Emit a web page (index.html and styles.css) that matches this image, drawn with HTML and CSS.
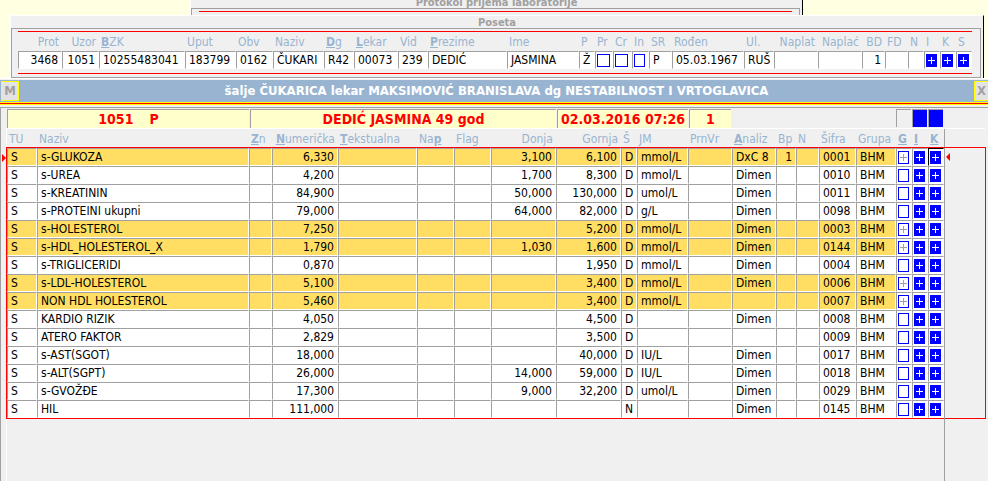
FILE: index.html
```html
<!DOCTYPE html>
<html lang="sr-Latn">
<head>
<meta charset="utf-8">
<title>Laboratorija</title>
<link rel="stylesheet" href="styles.css">
</head>
<body>
<section class="window window-protocol">
  <h2 class="window-title window-title-clipped">Protokol prijema laboratorije</h2>
  <div class="protocol-frame"><div class="protocol-rule"></div></div>
</section>

<section class="window window-visit">
  <h2 class="window-title">Poseta</h2>
  <div class="visit-frame">
    <div class="visit-body">
      <table class="grid visit-grid">
        <colgroup>
          <col class="w44"><col class="w37"><col><col class="w51"><col class="w37"><col class="w51"><col class="w30"><col class="w44"><col class="w30"><col class="w79"><col class="w72"><col class="w16"><col class="w18"><col class="w19"><col class="w17"><col class="w23"><col class="w72"><col class="w30"><col class="w44"><col class="w44"><col class="w23"><col class="w23"><col class="w16"><col class="w16"><col class="w16"><col class="w16">
        </colgroup>
        <thead>
          <tr>
            <th class="num">Prot</th><th class="num">Uzor</th><th><b>B</b>ZK</th><th>Uput</th><th>Obv</th><th>Naziv</th><th><b>D</b>g</th><th><b>L</b>ekar</th><th>Vid</th><th><b>P</b>rezime</th><th>Ime</th><th>P</th><th>Pr</th><th>Cr</th><th>In</th><th>SR</th><th>Rođen</th><th>Ul.</th><th class="num">Naplat</th><th class="num">Naplać</th><th class="num">BD</th><th>FD</th><th>N</th><th>I</th><th>K</th><th>S</th>
          </tr>
        </thead>
        <tbody>
          <tr>
            <td class="num">3468</td><td class="num">1051</td><td>10255483041</td><td>183799</td><td>0162</td><td>ČUKARI</td><td>R42</td><td>00073</td><td>239</td><td>DEDIĆ</td><td>JASMINA</td><td>Ž</td>
            <td class="tick"><input class="box wide" type="checkbox" aria-label="Pr"></td>
            <td class="tick"><input class="box wide" type="checkbox" aria-label="Cr"></td>
            <td class="tick"><input class="box" type="checkbox" aria-label="In"></td>
            <td>P</td><td>05.03.1967</td><td>RUŠ</td><td></td><td></td><td class="num">1</td><td></td><td></td>
            <td class="tick"><input class="box" type="checkbox" checked aria-label="I"></td>
            <td class="tick"><input class="box" type="checkbox" checked aria-label="K"></td>
            <td class="tick"><input class="box" type="checkbox" checked aria-label="S"></td>
          </tr>
        </tbody>
      </table>
    </div>
  </div>
</section>

<main class="results">
  <header class="results-bar">
    <button class="bar-button" type="button">M</button>
    <h1 class="results-title">šalje ČUKARICA lekar MAKSIMOVIĆ BRANISLAVA dg NESTABILNOST I VRTOGLAVICA</h1>
    <button class="bar-button bar-button-close" type="button">X</button>
  </header>
  <div class="results-frame">
    <div class="summary">
      <div class="summary-cell summary-sample"><span>1051</span><span>P</span></div>
      <div class="summary-cell">DEDIĆ JASMINA 49 god</div>
      <div class="summary-cell">02.03.2016 07:26</div>
      <div class="summary-cell">1</div>
      <div></div>
      <div class="summary-flag"></div>
      <div class="summary-flag on"></div>
      <div class="summary-flag on"></div>
    </div>
    <div class="results-area">
      <table class="grid results-grid">
        <colgroup>
          <col class="w30"><col><col class="w23"><col class="w66"><col class="w79"><col class="w37"><col class="w37"><col class="w65"><col class="w65"><col class="w16"><col class="w51"><col class="w44"><col class="w44"><col class="w20"><col class="w23"><col class="w37"><col class="w40"><col class="w16"><col class="w16"><col class="w16"><col class="w41">
        </colgroup>
        <thead>
          <tr>
            <th>TU</th><th>Naziv</th><th><b>Z</b>n</th><th class="num"><b>N</b>umerička</th><th><b>T</b>ekstualna</th><th>Na<b>p</b></th><th>Flag</th><th class="num">Donja</th><th class="num">Gornja</th><th>Š</th><th>JM</th><th>PrnVr</th><th><b>A</b>naliz</th><th>Bp</th><th>N</th><th>Šifra</th><th>Grupa</th><th><b>G</b></th><th><b>I</b></th><th><b>K</b></th><td class="margin"></td>
          </tr>
        </thead>
        <tbody id="rows"></tbody>
      </table>
      <div class="results-rest"></div>
    </div>
  </div>
</main>
<script src="rows.js"></script>
</body>
</html>
```
FILE: styles.css
```css
*, *::before, *::after { box-sizing: border-box; }

html, body { height: 100%; }

body {
  margin: 0;
  display: flex;
  flex-direction: column;
  overflow: hidden;
  background: #ffffe1;
  color: #000;
  font: 12px/16px "DejaVu Sans Condensed", "Noto Sans", sans-serif;
}

h1, h2 { margin: 0; }

.window {
  background: #f0f0f0;
  border-left: 1px solid #fff;
  border-right: 1px solid #000;
}

.window-title {
  height: 12px;
  color: #a0a0a0;
  font-size: 11px;
  line-height: 14px;
  text-align: center;
}

.window-protocol {
  height: 15px;
  margin: 0 185px 0 190px;
  flex: none;
}

.window-title-clipped {
  display: flex;
  align-items: flex-end;
  justify-content: center;
  height: 8px;
  line-height: 10px;
  overflow: hidden;
}

.protocol-frame {
  height: 7px;
  margin-right: 2px;
  padding: 2px 7px 0;
  border: 1px solid #a0a0a0;
  border-bottom: 0;
}

.protocol-rule { border-top: 1px solid #f00; }

.window-visit {
  flex: none;
  margin: 0 4px 0 10px;
  border-top: 1px solid #fff;
}

.visit-frame {
  margin-right: 2px;
  padding: 2px 8px 3px 6px;
  border: 1px solid #a0a0a0;
}

.visit-body {
  padding-bottom: 4px;
  border-top: 1px solid #f00;
  border-bottom: 1px solid #f00;
}

.grid {
  width: 100%;
  table-layout: fixed;
  border-collapse: separate;
  border-spacing: 0;
}

.grid th {
  height: 19px;
  padding: 0 2px;
  color: #99b4d1;
  font-weight: normal;
  text-align: left;
  white-space: nowrap;
}

.grid th b { text-decoration: underline; }

.grid td {
  height: 18px;
  padding: 0 0 0 3px;
  border: 1px solid #fff;
  border-top-color: #a0a0a0;
  border-left-color: #a0a0a0;
  background: #fff;
  white-space: nowrap;
}

.grid th.num, .grid td.num {
  padding: 0 3px 0 0;
  text-align: right;
}

.grid td.tick { padding: 0 0 0 1px; }

.w16 { width: 16px; }
.w17 { width: 17px; }
.w18 { width: 18px; }
.w19 { width: 19px; }
.w20 { width: 20px; }
.w23 { width: 23px; }
.w30 { width: 30px; }
.w37 { width: 37px; }
.w40 { width: 40px; }
.w41 { width: 41px; }
.w44 { width: 44px; }
.w51 { width: 51px; }
.w65 { width: 65px; }
.w66 { width: 66px; }
.w72 { width: 72px; }
.w79 { width: 79px; }

.box {
  display: block;
  appearance: none;
  width: 11px;
  height: 13px;
  margin: 0;
  border: 1px solid #00f;
  background: #fff;
  --plus: #fff;
}

.box.wide { width: 13px; }

.box:checked, .box.partial {
  background:
    linear-gradient(var(--plus), var(--plus)) center / 7px 1px no-repeat,
    linear-gradient(var(--plus), var(--plus)) center / 1px 7px no-repeat,
    #00f;
}

.box.partial {
  --plus: #a0a0a0;
  background-color: #fff;
}

.results {
  flex: 1;
  display: flex;
  flex-direction: column;
  min-height: 0;
  padding-top: 1px;
  background: #f0f0f0;
  border-top: 1px solid #fff;
}

.results-bar {
  flex: none;
  display: flex;
  align-items: center;
  height: 22px;
  padding-left: 1px;
  background: #99b4d1;
}

.bar-button {
  width: 18px;
  height: 20px;
  padding: 0;
  border: 1px solid #ff0;
  background: #e3e3e3;
  color: #a0a0a0;
  font: bold 13px/18px "DejaVu Sans Condensed", "Noto Sans", sans-serif;
}

.bar-button-close {
  width: 14px;
  border-right: 0;
}

.results-title {
  flex: 1;
  color: #fff;
  font-size: 13px;
  text-align: center;
}

.results-frame {
  flex: 1;
  display: flex;
  flex-direction: column;
  min-height: 0;
  position: relative;
  margin-top: 5px;
  padding-top: 1px;
  border-top: 1px solid #a0a0a0;
  border-left: 1px solid #a0a0a0;
}

.results-frame::before {
  content: "";
  position: absolute;
  inset: -6px 0 auto -1px;
  height: 3px;
  border: 1px solid #ff0;
  border-width: 1px 0;
  background: #f00;
}

.summary {
  flex: none;
  display: grid;
  grid-template-columns: 1fr 307px 132px 43px 164px 16px 16px 16px;
  height: 19px;
  margin: 0 44px 0 6px;
}

.summary-cell {
  margin: 0 1px 0 0;
  border-top: 1px solid #a0a0a0;
  border-left: 1px solid #a0a0a0;
  background: #ffffcc;
  color: #f00;
  font-weight: bold;
  font-size: 14px;
  line-height: 18px;
  text-align: center;
  white-space: nowrap;
}

.summary-sample {
  display: flex;
  justify-content: center;
  gap: 16px;
}

.summary-flag {
  margin: 0 1px 1px 0;
  border: 1px solid #a0a0a0;
  border-width: 1px 0 0 1px;
}

.summary-flag.on { background: #00f; }

.results-area {
  flex: 1;
  display: flex;
  flex-direction: column;
  min-height: 0;
  margin: 0 3px 0 5px;
  border-top: 1px solid #fff;
  border-left: 1px solid #fff;
}

.results-grid { flex: none; }

.results-grid tbody { outline: 1px solid #f00; }

.results-grid .flagged td { background: #ffde63; }

.results-grid .flagged td.tick { background: #fff; }

.results-grid td.margin,
.results-grid .flagged td.margin {
  border: 0;
  border-left: 1px solid #a0a0a0;
  background: none;
}

.results-grid .focused {
  border-top-color: #000;
  border-left-color: #000;
}

.current td:first-child, .current .margin { position: relative; }

.current td:first-child::before, .current .margin::after {
  content: "";
  position: absolute;
  top: 5px;
  border: 4px solid transparent;
}

.current td:first-child::before {
  left: -6px;
  border-left-color: #f00;
  border-right: 0;
}

.current .margin::after {
  left: 1px;
  border-right-color: #f00;
  border-left: 0;
}

.results-rest {
  flex: 1;
  margin-right: 40px;
  border-right: 1px solid #a0a0a0;
}
```
FILE: rows.js
```javascript
// name, numeric, lower, upper, status, unit, analyser, place, code, out of range
const results = [
  ["s-GLUKOZA", "6,330", "3,100", "6,100", "D", "mmol/L", "DxC 8", "1", "0001", true],
  ["s-UREA", "4,200", "1,700", "8,300", "D", "mmol/L", "Dimen", "", "0010", false],
  ["s-KREATININ", "84,900", "50,000", "130,000", "D", "umol/L", "Dimen", "", "0011", false],
  ["s-PROTEINI ukupni", "79,000", "64,000", "82,000", "D", "g/L", "Dimen", "", "0098", false],
  ["s-HOLESTEROL", "7,250", "", "5,200", "D", "mmol/L", "Dimen", "", "0003", true],
  ["s-HDL_HOLESTEROL_X", "1,790", "1,030", "1,600", "D", "mmol/L", "Dimen", "", "0144", true],
  ["s-TRIGLICERIDI", "0,870", "", "1,950", "D", "mmol/L", "Dimen", "", "0004", false],
  ["s-LDL-HOLESTEROL", "5,100", "", "3,400", "D", "mmol/L", "Dimen", "", "0006", true],
  ["NON HDL HOLESTEROL", "5,460", "", "3,400", "D", "mmol/L", "", "", "0007", true],
  ["KARDIO RIZIK", "4,050", "", "4,500", "D", "", "Dimen", "", "0008", false],
  ["ATERO FAKTOR", "2,829", "", "3,500", "D", "", "", "", "0009", false],
  ["s-AST(SGOT)", "18,000", "", "40,000", "D", "IU/L", "Dimen", "", "0017", false],
  ["s-ALT(SGPT)", "26,000", "14,000", "59,000", "D", "IU/L", "Dimen", "", "0018", false],
  ["s-GVOŽĐE", "17,300", "9,000", "32,200", "D", "umol/L", "Dimen", "", "0029", false],
  ["HIL", "111,000", "", "", "N", "", "Dimen", "", "0145", false]
];

const cell = (text, cls = "") => `<td class="${cls}">${text}</td>`;
const tick = (label, attrs, cls = "") =>
  `<td class="tick ${cls}"><input type="checkbox" aria-label="${label}" ${attrs}></td>`;

document.getElementById("rows").innerHTML = results.map((r, i) => {
  const [name, value, low, high, status, unit, analyser, place, code, flagged] = r;
  return `<tr class="${flagged ? "flagged" : ""} ${i === 0 ? "current" : ""}">` +
    cell("S") + cell(name) + cell("") + cell(value, "num") + cell("") + cell("") + cell("") +
    cell(low, "num") + cell(high, "num") + cell(status) + cell(unit) + cell("") +
    cell(analyser) + cell(place, "num") + cell("") + cell(code) + cell("BHM") +
    tick("G " + name, `class="box ${flagged ? "partial" : ""}"`) +
    tick("I " + name, `class="box" checked`) +
    tick("K " + name, `class="box" checked`, i === 0 ? "focused" : "") +
    `<td class="margin"></td></tr>`;
}).join("");
```
